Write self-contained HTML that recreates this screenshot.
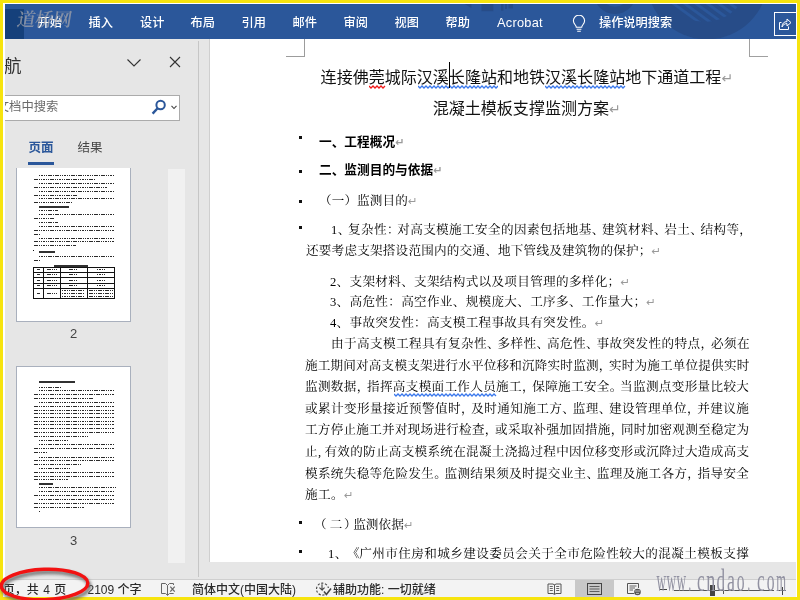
<!DOCTYPE html>
<html lang="zh-CN">
<head>
<meta charset="utf-8">
<title>Word</title>
<style>
*{box-sizing:border-box;margin:0;padding:0}
html,body{width:800px;height:600px;overflow:hidden}
body{background:#f7e40e;position:relative;font-family:"Liberation Sans","Noto Sans CJK SC",sans-serif;font-size:12px;color:#333}
.abs{position:absolute}
#white{left:3px;top:3px;width:794px;height:594px;background:#fff}
#app{left:5px;top:4px;width:791px;height:593px;background:#e6e6e6;overflow:hidden}
/* ribbon */
#ribbon{left:0;top:0;width:791px;height:34.5px;background:#2b579a;overflow:hidden}
#filetab{left:0;top:5px;width:19px;height:30px;background:#15407b}
.tab{position:absolute;top:10px;height:18px;line-height:18px;color:#fff;font-size:12.2px;white-space:nowrap;font-weight:500}
/* nav pane */
#pane{left:0;top:34.5px;width:193px;height:545px;background:#e6e6e6}
#panesep{left:193px;top:37px;width:1px;height:536px;background:#c6c6c6}
#docedge{left:204px;top:34.5px;width:1px;height:523px;background:#cfcfcf}
#doc{left:205px;top:34.5px;width:586px;height:523px;background:#fff;overflow:hidden}
#app,#doc,#pane,#ribbon,#status{will-change:transform}
#hscroll{left:194px;top:557.5px;width:597px;height:18px;background:#e6e6e6}
#status{left:0;top:575px;width:791px;height:18px;background:#f3f3f3;box-shadow:inset 0 1px 0 #cfcfcf}
.st{position:absolute;top:3px;height:17px;line-height:17px;font-size:12px;color:#2b2b2b;white-space:nowrap;font-weight:500}
.thumb{position:absolute;left:11px;width:115px;background:#fff;border:1px solid #a9b0bd;overflow:hidden}
.tl{position:absolute;height:1px;background-image:repeating-linear-gradient(90deg,#2a2a2a 0 1.5px,transparent 1.5px 2.3px)}
.pgnum{position:absolute;width:20px;text-align:center;font-size:13px;color:#444;line-height:14px}
/* document text */
.ln{position:absolute;white-space:nowrap;text-spacing-trim:space-all;font-kerning:none;transform:scaleX(1.05);transform-origin:0 50%;font-family:"Liberation Serif","Noto Serif CJK SC",serif;font-size:12.0px;line-height:20px;height:20px;color:#000;font-weight:400}

.h{font-weight:700;font-family:"Liberation Sans","Noto Sans CJK SC",sans-serif;font-size:12.7px;letter-spacing:0 !important;transform:none}
.t{position:absolute;white-space:nowrap;font-family:"Liberation Sans","Noto Sans CJK SC",sans-serif;font-size:16.05px;line-height:22px;height:22px;color:#111}
.pm{color:#9a9a9a;font-family:"DejaVu Sans","Liberation Sans",sans-serif;font-size:11px;letter-spacing:0}
.t .pm{font-size:14px}
.bul{position:absolute;left:89px;width:3px;height:3px;background:#111}
</style>
</head>
<body>
<div id="white" class="abs"></div>
<div id="app" class="abs">
  <div id="ribbon" class="abs">
    <svg class="abs" style="left:0;top:0" width="791" height="35" viewBox="0 0 791 35">
      <defs><clipPath id="cc"><circle cx="700" cy="-25" r="43"/></clipPath></defs>
      <circle cx="702" cy="-25.7" r="61" fill="#274c88"/>
      <g stroke="#2b579a" stroke-width="2.9" clip-path="url(#cc)"><line x1="609.6" y1="-26.5" x2="694.5" y2="35.3"/><line x1="621.1" y1="-26.5" x2="706.0" y2="35.3"/><line x1="632.6" y1="-26.5" x2="717.5" y2="35.3"/><line x1="643.9" y1="-26.5" x2="728.8" y2="35.3"/><line x1="655.2" y1="-26.5" x2="740.1" y2="35.3"/><line x1="666.6" y1="-26.5" x2="751.5" y2="35.3"/><line x1="677.9" y1="-26.5" x2="762.8" y2="35.3"/><line x1="689.2" y1="-26.5" x2="774.1" y2="35.3"/></g>
      <circle cx="610" cy="-11.2" r="17.6" fill="none" stroke="#274c88" stroke-width="7.2"/>
      <g fill="#274c88"><path d="M459.6 0 H466.4 V4 Z"/><rect x="476.5" y="0" width="11.8" height="7.2"/><rect x="496" y="0" width="2.4" height="6.7"/><rect x="500" y="0" width="2" height="5"/><rect x="503.5" y="0" width="4.5" height="4.4"/></g>
    </svg>
    <div id="filetab" class="abs"></div>
    
    <div class="tab" style="left:32.5px">开始</div>
    <div class="abs" style="left:9.5px;top:2px;font-family:'Liberation Serif','Noto Serif CJK SC',serif;font-size:18.5px;font-weight:600;line-height:28px;color:rgba(165,165,170,.72);letter-spacing:-0.4px;white-space:nowrap;transform:skewX(-9deg);transform-origin:0 100%">道桥网</div>
    <div class="tab" style="left:83.5px">插入</div>
    <div class="tab" style="left:135px">设计</div>
    <div class="tab" style="left:185.5px">布局</div>
    <div class="tab" style="left:236.5px">引用</div>
    <div class="tab" style="left:287.5px">邮件</div>
    <div class="tab" style="left:338.5px">审阅</div>
    <div class="tab" style="left:389.5px">视图</div>
    <div class="tab" style="left:440.5px">帮助</div>
    <div class="tab" style="left:492px;font-size:12.8px;letter-spacing:.25px">Acrobat</div>
    <svg class="abs" style="left:567px;top:11px" width="14" height="18" viewBox="0 0 14 18" fill="none" stroke="#fff" stroke-width="1.1">
      <path d="M4.3 12.2 C4.3 10.2 1.4 9 1.4 5.8 A5.6 5.6 0 0 1 12.6 5.8 C12.6 9 9.7 10.2 9.7 12.2 Z"/>
      <path d="M4.6 14.3 H9.4 M5.2 16.3 H8.8"/>
    </svg>
    <div class="tab" style="left:594px">操作说明搜索</div>
    <div class="abs" style="left:769px;top:8px;width:30px;height:23.5px;border:1.3px solid #fff"></div>
    <svg class="abs" style="left:773px;top:13px" width="14" height="14" viewBox="0 0 14 14" fill="none" stroke="#fff" stroke-width="1">
      <path d="M3.5 5.5 H1.5 V12.5 H10.5 V9.5"/>
      <path d="M4 10 C4 6.5 6 4.6 9 4.6 V2 L13 5.6 L9 9 V6.6 C6.8 6.6 5 7.6 4 10 Z"/>
    </svg>
  </div>

  <div id="pane" class="abs">
    <div class="abs" style="left:-18.5px;top:14.5px;font-size:17.5px;line-height:24px;color:#333;white-space:nowrap">导航</div>
    <svg class="abs" style="left:121px;top:18.5px" width="16" height="10" viewBox="0 0 16 10" fill="none" stroke="#333" stroke-width="1.1"><path d="M1.5 1.5 L8 8 L14.5 1.5"/></svg>
    <svg class="abs" style="left:164px;top:17px" width="12" height="12" viewBox="0 0 12 12" fill="none" stroke="#333" stroke-width="1.1"><path d="M1 1 L11 11 M11 1 L1 11"/></svg>
    <div class="abs" style="left:-20px;top:55.7px;width:195px;height:26px;background:#fff;border:1px solid #ababab"></div>
    <div class="abs" style="left:-20.5px;top:59px;font-size:12.3px;line-height:18px;color:#6a6a6a;white-space:nowrap">在文档中搜索</div>
    <svg class="abs" style="left:146px;top:60px" width="16" height="16" viewBox="0 0 16 16" fill="none" stroke="#2b579a" stroke-width="2"><circle cx="9.6" cy="6" r="4.2"/><path d="M6.6 9.2 L1.6 14.6" stroke-width="2.4"/></svg>
    <svg class="abs" style="left:166px;top:66px" width="6" height="5" viewBox="0 0 6 5" fill="none" stroke="#444" stroke-width="1.1"><path d="M0.5 0.8 L3 3.5 L5.5 0.8"/></svg>
    <div class="abs" style="left:23.5px;top:100px;font-size:12.5px;line-height:18px;font-weight:700;color:#2b579a;white-space:nowrap">页面</div>
    <div class="abs" style="left:23px;top:122.5px;width:26px;height:3px;background:#2b579a"></div>
    <div class="abs" style="left:72.5px;top:100px;font-size:12.5px;line-height:18px;color:#444;white-space:nowrap">结果</div>
    <div class="abs" style="left:162.5px;top:129.5px;width:17.5px;height:394px;background:#f1f1f1"></div>
    <div class="thumb" id="th2" style="top:128.5px;height:154px;border-top:none"><i class="tl" style="left:21.5px;top:7.0px;width:75.5px;height:1px;"></i><i class="tl" style="left:16.5px;top:11.0px;width:62.5px;height:1px;"></i><i class="tl" style="left:21.5px;top:15.0px;width:75.5px;height:1px;"></i><i class="tl" style="left:16.5px;top:19.0px;width:73.5px;height:1px;"></i><i class="tl" style="left:21.5px;top:23.0px;width:75.5px;height:1px;"></i><i class="tl" style="left:16.5px;top:27.0px;width:44.5px;height:1px;"></i><i class="tl" style="left:21.5px;top:30.0px;width:75.5px;height:1px;"></i><i class="tl" style="left:16.5px;top:34.0px;width:39.5px;height:1px;"></i><i class="tl" style="left:21.5px;top:38.0px;width:30.5px;height:2px;background:#1a1a1a;opacity:.9;"></i><i class="tl" style="left:21.5px;top:42.0px;width:19.5px;height:1px;"></i><i class="tl" style="left:21.5px;top:46.0px;width:75.5px;height:1px;"></i><i class="tl" style="left:16.5px;top:50.0px;width:20.1px;height:1px;"></i><i class="tl" style="left:21.5px;top:54.0px;width:19.5px;height:1px;"></i><i class="tl" style="left:21.5px;top:58.0px;width:75.5px;height:1px;"></i><i class="tl" style="left:16.5px;top:62.0px;width:80.5px;height:1px;"></i><i class="tl" style="left:16.5px;top:66.0px;width:7.5px;height:1px;"></i><i class="tl" style="left:21.5px;top:70.0px;width:75.5px;height:1px;"></i><i class="tl" style="left:16.5px;top:73.0px;width:80.5px;height:1px;"></i><i class="tl" style="left:16.5px;top:77.0px;width:42.0px;height:1px;"></i><i class="tl" style="left:21.5px;top:83.0px;width:16.5px;height:2px;background:#1a1a1a;opacity:.9;"></i><i class="tl" style="left:21.5px;top:88.0px;width:75.5px;height:1px;"></i><i class="tl" style="left:16.5px;top:92.0px;width:7.5px;height:1px;"></i><i class="tl" style="left:36.6px;top:97.0px;width:34.4px;height:2px;background:#1a1a1a;opacity:.9;"></i><i class="abs" style="left:15.5px;top:82.4px;width:1.2px;height:1.2px;background:#111"></i><i class="abs" style="left:16.3px;top:99.7px;width:81.4px;height:31.6px;border:1px solid #111"></i><i class="abs" style="left:16.3px;top:104.0px;width:81.4px;height:1px;background:#111"></i><i class="abs" style="left:16.3px;top:109.7px;width:81.4px;height:1px;background:#111"></i><i class="abs" style="left:16.3px;top:115.7px;width:81.4px;height:1px;background:#111"></i><i class="abs" style="left:16.3px;top:120.3px;width:81.4px;height:1px;background:#111"></i><i class="abs" style="left:26.3px;top:99.7px;width:1px;height:31.6px;background:#111"></i><i class="abs" style="left:43.0px;top:99.7px;width:1px;height:31.6px;background:#111"></i><i class="abs" style="left:69.7px;top:99.7px;width:1px;height:31.6px;background:#111"></i><i class="tl" style="left:19.8px;top:101.0px;width:3.0px;height:1px;"></i><i class="tl" style="left:29.6px;top:101.0px;width:10.0px;height:1px;"></i><i class="tl" style="left:52.3px;top:101.0px;width:8.0px;height:1px;"></i><i class="tl" style="left:79.7px;top:101.0px;width:8.0px;height:1px;"></i><i class="tl" style="left:19.8px;top:106.0px;width:3.0px;height:1px;"></i><i class="tl" style="left:29.6px;top:106.0px;width:10.0px;height:1px;"></i><i class="tl" style="left:52.3px;top:106.0px;width:8.0px;height:1px;"></i><i class="tl" style="left:79.7px;top:106.0px;width:8.0px;height:1px;"></i><i class="tl" style="left:19.8px;top:112.0px;width:3.0px;height:1px;"></i><i class="tl" style="left:29.6px;top:112.0px;width:10.0px;height:1px;"></i><i class="tl" style="left:52.3px;top:112.0px;width:8.0px;height:1px;"></i><i class="tl" style="left:79.7px;top:112.0px;width:8.0px;height:1px;"></i><i class="tl" style="left:19.8px;top:117.0px;width:3.0px;height:1px;"></i><i class="tl" style="left:29.6px;top:117.0px;width:10.0px;height:1px;"></i><i class="tl" style="left:52.3px;top:117.0px;width:8.0px;height:1px;"></i><i class="tl" style="left:79.7px;top:117.0px;width:8.0px;height:1px;"></i><i class="tl" style="left:19.8px;top:125.0px;width:3.0px;height:1px;"></i><i class="tl" style="left:29.6px;top:125.0px;width:10.0px;height:1px;"></i><i class="tl" style="left:45.0px;top:122.0px;width:22.7px;height:1px;"></i><i class="tl" style="left:45.0px;top:125.0px;width:22.7px;height:1px;"></i><i class="tl" style="left:45.0px;top:128.0px;width:22.7px;height:1px;"></i><i class="tl" style="left:71.7px;top:122.0px;width:24.0px;height:1px;"></i><i class="tl" style="left:71.7px;top:125.0px;width:24.0px;height:1px;"></i><i class="tl" style="left:71.7px;top:128.0px;width:24.0px;height:1px;"></i></div>
    <div class="pgnum" style="left:58.5px;top:288px">2</div>
    <div class="thumb" id="th3" style="top:326.5px;height:162.5px"><i class="tl" style="left:21.5px;top:14.0px;width:36.5px;height:2px;background:#1a1a1a;opacity:.9;"></i><i class="tl" style="left:21.5px;top:20.0px;width:22.0px;height:1px;"></i><i class="tl" style="left:21.5px;top:23.0px;width:75.9px;height:1px;"></i><i class="tl" style="left:16.7px;top:27.0px;width:80.7px;height:1px;"></i><i class="tl" style="left:16.7px;top:31.0px;width:59.8px;height:1px;"></i><i class="tl" style="left:21.5px;top:35.0px;width:75.9px;height:1px;"></i><i class="tl" style="left:16.7px;top:39.0px;width:80.7px;height:1px;"></i><i class="tl" style="left:16.7px;top:43.0px;width:80.7px;height:1px;"></i><i class="tl" style="left:16.7px;top:46.0px;width:80.7px;height:1px;"></i><i class="tl" style="left:16.7px;top:50.0px;width:80.7px;height:1px;"></i><i class="tl" style="left:16.7px;top:54.0px;width:80.7px;height:1px;"></i><i class="tl" style="left:16.7px;top:57.0px;width:80.7px;height:1px;"></i><i class="tl" style="left:16.7px;top:61.0px;width:80.7px;height:1px;"></i><i class="tl" style="left:16.7px;top:65.0px;width:80.7px;height:1px;"></i><i class="tl" style="left:16.7px;top:69.0px;width:54.3px;height:1px;"></i><i class="tl" style="left:21.5px;top:73.0px;width:29.5px;height:1px;"></i><i class="tl" style="left:21.5px;top:77.0px;width:75.9px;height:1px;"></i><i class="tl" style="left:16.7px;top:81.0px;width:80.7px;height:1px;"></i><i class="tl" style="left:16.7px;top:85.0px;width:13.9px;height:1px;"></i><i class="tl" style="left:21.5px;top:90.0px;width:75.9px;height:1px;"></i><i class="tl" style="left:16.7px;top:93.0px;width:80.7px;height:1px;"></i><i class="tl" style="left:16.7px;top:97.0px;width:48.8px;height:1px;"></i><i class="tl" style="left:21.5px;top:101.0px;width:31.2px;height:1px;"></i><i class="tl" style="left:16.7px;top:105.0px;width:80.7px;height:1px;"></i><i class="tl" style="left:16.7px;top:109.0px;width:80.7px;height:1px;"></i><i class="tl" style="left:16.7px;top:112.0px;width:34.1px;height:1px;"></i><i class="tl" style="left:21.5px;top:116.0px;width:14.5px;height:2px;background:#1a1a1a;opacity:.9;"></i><i class="tl" style="left:21.5px;top:120.0px;width:77.0px;height:1px;"></i><i class="tl" style="left:21.5px;top:124.0px;width:75.9px;height:1px;"></i><i class="tl" style="left:16.7px;top:128.0px;width:80.7px;height:1px;"></i><i class="tl" style="left:21.5px;top:132.0px;width:75.9px;height:1px;"></i><i class="tl" style="left:16.7px;top:136.0px;width:80.7px;height:1px;"></i><i class="tl" style="left:16.7px;top:140.0px;width:50.6px;height:1px;"></i><i class="tl" style="left:21.5px;top:144.0px;width:1.1px;height:1px;"></i></div>
    <div class="pgnum" style="left:58.5px;top:495px">3</div>
  </div>
  <div id="panesep" class="abs"></div>
  <div id="docedge" class="abs"></div>

  <div id="doc" class="abs">
    <!-- crop marks -->
    <div class="abs" style="left:94px;top:0;width:1px;height:18px;background:#9c9c9c"></div>
    <div class="abs" style="left:76px;top:17px;width:19px;height:1px;background:#9c9c9c"></div>
    <div class="abs" style="left:539px;top:0;width:1px;height:18px;background:#a0a0a0"></div>
    <div class="abs" style="left:539px;top:17px;width:19px;height:1px;background:#a0a0a0"></div>
<div class="t" style="left:110.6px;top:26.5px">连接佛莞城际汉溪长隆站和地铁汉溪长隆站地下通道工程<span class="pm">↵</span></div>
<div class="t" style="left:222.7px;top:57.5px">混凝土模板支撑监测方案<span class="pm">↵</span></div>
<div class="ln h" style="left:109.0px;top:92.5px;letter-spacing:0.10px;">一、工程概况<span class="pm">↵</span></div>
<div class="ln h" style="left:109.0px;top:121.0px;letter-spacing:0.10px;">二、监测目的与依据<span class="pm">↵</span></div>
<div class="ln" style="left:109.0px;top:152.1px;letter-spacing:0.10px;">（一）监测目的<span class="pm">↵</span></div>
<div class="ln" style="left:121.0px;top:181.0px;letter-spacing:0.35px;">1<span style="letter-spacing:-2.19px">、</span>复杂性<span style="letter-spacing:-2.19px">：</span>对高支模施工安全的因素包括地基<span style="letter-spacing:-2.19px">、</span>建筑材料<span style="letter-spacing:-2.19px">、</span>岩土<span style="letter-spacing:-2.19px">、</span>结构等<span style="letter-spacing:-2.19px">，</span></div>
<div class="ln" style="left:95.7px;top:201.8px;letter-spacing:0.19px;">还要考虑支架搭设范围内的交通、地下管线及建筑物的保护；<span class="pm">↵</span></div>
<div class="ln" style="left:120.2px;top:233.0px;letter-spacing:0.29px;">2、支架材料、支架结构式以及项目管理的多样化；<span class="pm">↵</span></div>
<div class="ln" style="left:120.2px;top:253.0px;letter-spacing:0.29px;">3、高危性：高空作业、规模庞大、工序多、工作量大；<span class="pm">↵</span></div>
<div class="ln" style="left:120.2px;top:274.0px;letter-spacing:0.29px;">4、事故突发性：高支模工程事故具有突发性。<span class="pm">↵</span></div>
<div class="ln" style="left:120.6px;top:295.0px;letter-spacing:0.38px;">由于高支模工程具有复杂性<span style="letter-spacing:-2.02px">、</span>多样性<span style="letter-spacing:-2.02px">、</span>高危性<span style="letter-spacing:-2.02px">、</span>事故突发性的特点<span style="letter-spacing:-2.02px">，</span>必须在</div>
<div class="ln" style="left:95.2px;top:316.6px;letter-spacing:0.16px;">施工期间对高支模支架进行水平位移和沉降实时监测<span style="letter-spacing:-2.19px">，</span>实时为施工单位提供实时</div>
<div class="ln" style="left:95.2px;top:338.2px;letter-spacing:0.30px;">监测数据<span style="letter-spacing:-2.19px">，</span>指挥高支模面工作人员施工<span style="letter-spacing:-2.19px">，</span>保障施工安全<span style="letter-spacing:-2.19px">。</span>当监测点变形量比较大</div>
<div class="ln" style="left:95.2px;top:359.8px;letter-spacing:0.38px;">或累计变形量接近预警值时<span style="letter-spacing:-2.17px">，</span>及时通知施工方<span style="letter-spacing:-2.17px">、</span>监理<span style="letter-spacing:-2.17px">、</span>建设管理单位<span style="letter-spacing:-2.17px">，</span>并建议施</div>
<div class="ln" style="left:95.2px;top:381.4px;letter-spacing:0.23px;">工方停止施工并对现场进行检查<span style="letter-spacing:-2.19px">，</span>或采取补强加固措施<span style="letter-spacing:-2.19px">，</span>同时加密观测至稳定为</div>
<div class="ln" style="left:95.2px;top:403.0px;letter-spacing:0.26px;">止<span style="letter-spacing:3.26px">,</span>有效的防止高支模系统在混凝土浇捣过程中因位移变形或沉降过大造成高支</div>
<div class="ln" style="left:95.2px;top:424.6px;letter-spacing:0.30px;">模系统失稳等危险发生<span style="letter-spacing:-2.19px">。</span>监测结果须及时提交业主<span style="letter-spacing:-2.19px">、</span>监理及施工各方<span style="letter-spacing:-2.19px">，</span>指导安全</div>
<div class="ln" style="left:95.2px;top:446.1px;letter-spacing:0.38px;">施工。<span class="pm">↵</span></div>
<div class="ln" style="left:109.0px;top:476.1px;letter-spacing:0.10px;"><span style="margin-left:-4.76px;letter-spacing:2.95px">（</span><span style="letter-spacing:1.62px">二</span><span style="letter-spacing:-3.33px">）</span>监测依据<span class="pm">↵</span></div>
<div class="ln" style="left:118.3px;top:504.7px;letter-spacing:0.38px;">1<span style="letter-spacing:-0.33px">、</span><span style="letter-spacing:-0.33px">《</span>广州市住房和城乡建设委员会关于全市危险性较大的混凝土模板支撑</div>
<i class="bul" style="top:97.2px"></i><i class="bul" style="top:131.0px"></i><i class="bul" style="top:160.8px"></i><i class="bul" style="top:187.0px"></i><i class="bul" style="top:481.5px"></i><i class="bul" style="top:511.0px"></i><svg class="abs" style="left:158.5px;top:45.5px" width="17.0" height="4" viewBox="0 0 17.0 4" fill="none" stroke="#f01818" stroke-width="1.25"><path d="M0.0 1.0 L2.0 3.0 L4.0 1.0 L6.0 3.0 L8.0 1.0 L10.0 3.0 L12.0 1.0 L14.0 3.0 L16.0 1.0"/></svg><svg class="abs" style="left:207.5px;top:45.5px" width="80.5" height="4" viewBox="0 0 80.5 4" fill="none" stroke="#3a78ec" stroke-width="1.25"><path d="M0.0 1.0 L2.0 3.0 L4.0 1.0 L6.0 3.0 L8.0 1.0 L10.0 3.0 L12.0 1.0 L14.0 3.0 L16.0 1.0 L18.0 3.0 L20.0 1.0 L22.0 3.0 L24.0 1.0 L26.0 3.0 L28.0 1.0 L30.0 3.0 L32.0 1.0 L34.0 3.0 L36.0 1.0 L38.0 3.0 L40.0 1.0 L42.0 3.0 L44.0 1.0 L46.0 3.0 L48.0 1.0 L50.0 3.0 L52.0 1.0 L54.0 3.0 L56.0 1.0 L58.0 3.0 L60.0 1.0 L62.0 3.0 L64.0 1.0 L66.0 3.0 L68.0 1.0 L70.0 3.0 L72.0 1.0 L74.0 3.0 L76.0 1.0 L78.0 3.0 L80.0 1.0"/></svg><svg class="abs" style="left:335.0px;top:45.5px" width="81.5" height="4" viewBox="0 0 81.5 4" fill="none" stroke="#3a78ec" stroke-width="1.25"><path d="M0.0 1.0 L2.0 3.0 L4.0 1.0 L6.0 3.0 L8.0 1.0 L10.0 3.0 L12.0 1.0 L14.0 3.0 L16.0 1.0 L18.0 3.0 L20.0 1.0 L22.0 3.0 L24.0 1.0 L26.0 3.0 L28.0 1.0 L30.0 3.0 L32.0 1.0 L34.0 3.0 L36.0 1.0 L38.0 3.0 L40.0 1.0 L42.0 3.0 L44.0 1.0 L46.0 3.0 L48.0 1.0 L50.0 3.0 L52.0 1.0 L54.0 3.0 L56.0 1.0 L58.0 3.0 L60.0 1.0 L62.0 3.0 L64.0 1.0 L66.0 3.0 L68.0 1.0 L70.0 3.0 L72.0 1.0 L74.0 3.0 L76.0 1.0 L78.0 3.0 L80.0 1.0"/></svg><svg class="abs" style="left:184.0px;top:354.0px" width="103.0" height="4" viewBox="0 0 103.0 4" fill="none" stroke="#3a78ec" stroke-width="1.25"><path d="M0.0 1.0 L2.0 3.0 L4.0 1.0 L6.0 3.0 L8.0 1.0 L10.0 3.0 L12.0 1.0 L14.0 3.0 L16.0 1.0 L18.0 3.0 L20.0 1.0 L22.0 3.0 L24.0 1.0 L26.0 3.0 L28.0 1.0 L30.0 3.0 L32.0 1.0 L34.0 3.0 L36.0 1.0 L38.0 3.0 L40.0 1.0 L42.0 3.0 L44.0 1.0 L46.0 3.0 L48.0 1.0 L50.0 3.0 L52.0 1.0 L54.0 3.0 L56.0 1.0 L58.0 3.0 L60.0 1.0 L62.0 3.0 L64.0 1.0 L66.0 3.0 L68.0 1.0 L70.0 3.0 L72.0 1.0 L74.0 3.0 L76.0 1.0 L78.0 3.0 L80.0 1.0 L82.0 3.0 L84.0 1.0 L86.0 3.0 L88.0 1.0 L90.0 3.0 L92.0 1.0 L94.0 3.0 L96.0 1.0 L98.0 3.0 L100.0 1.0 L102.0 3.0"/></svg><i class="abs" style="left:239.0px;top:23.0px;width:1px;height:26px;background:#000"></i>
  </div>

  <div id="hscroll" class="abs"></div>
  <div id="status" class="abs"><div class="st" style="left:-2.3px;word-spacing:1.1px">页，共 4 页</div><div class="st" style="left:82.5px">2109 个字</div><svg class="abs" style="left:156px;top:3px" width="16" height="15" viewBox="0 0 16 15" fill="none" stroke="#666" stroke-width="1"><path d="M0.5 1.5 H4.5 L6.5 3.5 V13.3 L4.5 11.5 H0.5 Z"/><path d="M6.5 3.5 L8.5 1.5 H12.5 V3 M6.5 13.3 L8.5 11.5 H12.7"/><path d="M9.3 4.7 L13.7 9.7 M13.7 4.7 L9.3 9.7" stroke-width="1.25"/></svg><div class="st" style="left:187px">简体中文(中国大陆)</div><svg class="abs" style="left:310px;top:2.5px" width="17" height="15" viewBox="0 0 17 15" fill="none" stroke="#444" stroke-width="1.1"><path d="M9.5 12.8 A6 6 0 1 1 13.4 6" stroke-dasharray="2.2 1.6"/><path d="M9 9.6 L11.4 12.4 L16 6.6" stroke-width="1.6" stroke-dasharray="none"/><path d="M7 2.2 V8 L4.4 5.6 M7 8 L9.6 5.6" stroke-width="1.1"/></svg><div class="st" style="left:328px">辅助功能: 一切就绪</div><div class="abs" style="left:569.5px;top:0.7px;width:39px;height:17.3px;background:#c8c8c8"></div><svg class="abs" style="left:541.5px;top:3.5px" width="15" height="12" viewBox="0 0 15 12" fill="none" stroke="#555" stroke-width="1"><path d="M7.5 1.5 V11 M1 1 H6 L7.5 2 L9 1 H14 V10.5 H9 L7.5 11.5 L6 10.5 H1 Z"/><path d="M2.8 3.5 H5.8 M2.8 5.5 H5.8 M2.8 7.5 H5.8 M9.2 3.5 H12.2 M9.2 5.5 H12.2 M9.2 7.5 H12.2" stroke-width="0.9"/></svg><svg class="abs" style="left:581.5px;top:3.5px" width="15" height="12" viewBox="0 0 15 12" fill="none" stroke="#444" stroke-width="1"><rect x="0.5" y="0.5" width="14" height="11"/><path d="M2.5 3.5 H12.5 M2.5 6 H12.5 M2.5 8.5 H12.5" stroke-width="0.8"/></svg><svg class="abs" style="left:622px;top:3.5px" width="15" height="13" viewBox="0 0 15 13" fill="none" stroke="#555" stroke-width="1"><path d="M7 10.5 H0.5 V0.5 H11.5 V5"/><path d="M2.5 3 H9.5 M2.5 5 H8 M2.5 7 H6" stroke-width="0.9"/><circle cx="10.5" cy="9" r="3.3" fill="#555" stroke="none"/><path d="M8 8 H13 M9 10.4 H12" stroke="#eee" stroke-width="0.7"/></svg><div class="abs" style="left:655px;top:10px;width:7px;height:1px;background:#444"></div><div class="abs" style="left:668.5px;top:11px;width:100px;height:1px;background:#555"></div><div class="abs" style="left:718px;top:7.5px;width:1px;height:7px;background:#555"></div><div class="abs" style="left:705px;top:5.5px;width:5px;height:11px;background:#444"></div><div class="abs" style="left:773px;top:11px;width:8px;height:1px;background:#444"></div><div class="abs" style="left:776.5px;top:7.5px;width:1px;height:8px;background:#444"></div></div>
<div class="abs" style="left:651.6px;top:556.9px;width:130px;height:40px;font-family:'Liberation Serif',serif;font-size:31px;line-height:40px;color:#9191a1;white-space:nowrap"><span style="position:absolute;left:-6.23px;top:0;width:22.38px;transform:scaleX(0.429);transform-origin:50% 50%;text-align:center">w</span><span style="position:absolute;left:3.69px;top:0;width:22.38px;transform:scaleX(0.429);transform-origin:50% 50%;text-align:center">w</span><span style="position:absolute;left:13.61px;top:0;width:22.38px;transform:scaleX(0.429);transform-origin:50% 50%;text-align:center">w</span><span style="position:absolute;left:29.09px;top:0;width:7.75px;transform:scaleX(0.335);transform-origin:50% 50%;text-align:center">.</span><span style="position:absolute;left:37.76px;top:0;width:13.76px;transform:scaleX(0.552);transform-origin:50% 50%;text-align:center">c</span><span style="position:absolute;left:46.81px;top:0;width:15.50px;transform:scaleX(0.581);transform-origin:50% 50%;text-align:center">n</span><span style="position:absolute;left:56.73px;top:0;width:15.50px;transform:scaleX(0.555);transform-origin:50% 50%;text-align:center">d</span><span style="position:absolute;left:67.52px;top:0;width:13.76px;transform:scaleX(0.581);transform-origin:50% 50%;text-align:center">a</span><span style="position:absolute;left:76.57px;top:0;width:15.50px;transform:scaleX(0.503);transform-origin:50% 50%;text-align:center">o</span><span style="position:absolute;left:88.61px;top:0;width:7.75px;transform:scaleX(0.335);transform-origin:50% 50%;text-align:center">.</span><span style="position:absolute;left:97.28px;top:0;width:13.76px;transform:scaleX(0.552);transform-origin:50% 50%;text-align:center">c</span><span style="position:absolute;left:106.33px;top:0;width:15.50px;transform:scaleX(0.503);transform-origin:50% 50%;text-align:center">o</span><span style="position:absolute;left:111.94px;top:0;width:24.12px;transform:scaleX(0.406);transform-origin:50% 50%;text-align:center">m</span></div>
</div>
<svg class="abs" style="left:0;top:560px" width="100" height="40" viewBox="0 560 100 40" fill="none"><defs><filter id="bl" x="-20%" y="-20%" width="140%" height="140%"><feGaussianBlur stdDeviation="1.4"/></filter></defs><g transform="rotate(-2 44.5 584.5)"><ellipse cx="46" cy="587.4" rx="43.3" ry="15.2" stroke="#666" stroke-width="4" filter="url(#bl)" opacity=".85"/><ellipse cx="44.5" cy="584.5" rx="43.3" ry="15.2" stroke="#f21212" stroke-width="3.4"/></g></svg>
</body>
</html>
